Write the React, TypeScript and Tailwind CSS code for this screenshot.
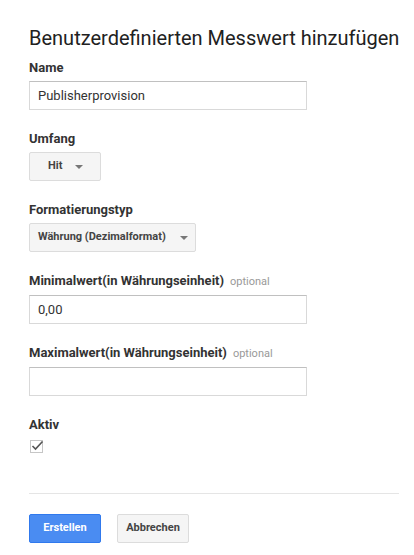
import React from "react";

function Field({ label, hint, children }: { label: string; hint?: string; children: React.ReactNode }) {
  return (
    <div className="mb-[21px]">
      <div className="text-[13px] leading-4 font-bold text-[#333] whitespace-nowrap">
        {label}
        {hint && <span className="ml-[6px] text-[11px] font-normal text-[#999]">{hint}</span>}
      </div>
      <div className="mt-[5px]">{children}</div>
    </div>
  );
}

function TextInput({ value }: { value?: string }) {
  return (
    <input
      readOnly
      value={value ?? ""}
      className="block w-[278px] h-[29px] border border-[#d9d9d9] border-t-[#c0c0c0] bg-white px-2 text-[13px] text-[#333] outline-none"
    />
  );
}

function Caret() {
  return (
    <svg width="8" height="4" viewBox="0 0 8 4" className="fill-[#777] shrink-0">
      <path d="M0 0h8L4 4z" />
    </svg>
  );
}

export default function App() {
  return (
    <div className="min-h-[555px] bg-white pl-[29px] pr-[10px] pt-[26px]" style={{ fontFamily: "Roboto, Arial, sans-serif" }}>
      <h1 className="text-[20px] leading-6 font-normal text-[#212121] mb-[10px] whitespace-nowrap">
        Benutzerdefinierten Messwert hinzufügen
      </h1>

      <Field label="Name">
        <TextInput value="Publisherprovision" />
      </Field>

      <Field label="Umfang">
        <button className="w-[72px] h-[29px] inline-flex items-center gap-[13px] rounded-[2px] border border-[#dcdcdc] bg-[#f5f5f5] pl-[18px] text-[11px] font-bold text-[#444] whitespace-nowrap">
          <span>Hit</span>
          <Caret />
        </button>
      </Field>

      <Field label="Formatierungstyp">
        <button className="w-[167px] h-[29px] inline-flex items-center gap-[14px] rounded-[2px] border border-[#dcdcdc] bg-[#f5f5f5] pl-[8px] text-[11px] font-bold text-[#444] whitespace-nowrap">
          <span>Währung (Dezimalformat)</span>
          <Caret />
        </button>
      </Field>

      <Field label="Minimalwert(in Währungseinheit)" hint="optional">
        <TextInput value="0,00" />
      </Field>

      <Field label="Maximalwert(in Währungseinheit)" hint="optional">
        <TextInput />
      </Field>

      <div>
        <div className="text-[13px] leading-4 font-bold text-[#333]">Aktiv</div>
        <div className="mt-[7px] ml-px w-[13px] h-[13px] border border-[#c6c6c6] flex items-center justify-center">
          <svg width="13" height="11" viewBox="0 0 13 11" className="-mt-[2px] ml-[2px] shrink-0">
            <path d="M1.5 6l3 3L11.5 1.5" fill="none" stroke="#555" strokeWidth="1.6" />
          </svg>
        </div>
      </div>

      <div className="mt-[40px] mr-[5px] border-t border-[#e5e5e5]" />

      <div className="mt-[20px] flex gap-4">
        <button className="w-[72px] h-[29px] rounded-[2px] border border-[#3079ed] bg-[#4a8cf2] text-[11px] font-bold text-white whitespace-nowrap">
          Erstellen
        </button>
        <button className="w-[72px] h-[29px] rounded-[2px] border border-[#dcdcdc] bg-[#f5f5f5] text-[11px] font-bold text-[#444] whitespace-nowrap">
          Abbrechen
        </button>
      </div>
    </div>
  );
}
